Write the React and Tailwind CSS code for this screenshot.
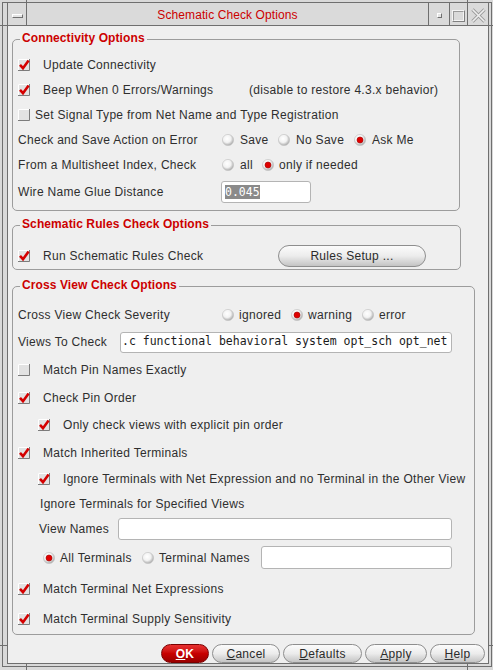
import React from "react";

function Check({ on }) {
  return (
    <svg width="12" height="12" viewBox="0 0 12 12" className="shrink-0 overflow-visible">
      <rect x="0" y="0" width="12" height="12" fill="#e2e2e2" />
      <path d="M0.5 12 V0.5 H12" stroke="#ffffff" fill="none" />
      <path d="M0 11.5 H11.5 V0" stroke="#7c7c7c" fill="none" />
      {on && (
        <path d="M2 5.8 L5 9.2 L10.6 1.6" stroke="#d40000" strokeWidth="2.6" fill="none" strokeLinejoin="miter" />
      )}
    </svg>
  );
}

function Radio({ on }) {
  return (
    <svg width="12" height="12" viewBox="0 0 12 12" className="shrink-0">
      <defs>
        <radialGradient id="rg" cx="42%" cy="38%" r="62%">
          <stop offset="0" stopColor="#ffffff" />
          <stop offset="0.55" stopColor="#f2f2f2" />
          <stop offset="1" stopColor="#a9a9a9" />
        </radialGradient>
      </defs>
      <circle cx="6" cy="6" r="5.6" fill="url(#rg)" stroke="#c2c2c2" strokeWidth="0.6" />
      {on && <circle cx="6" cy="6" r="3" fill="#e00000" stroke="#a00000" strokeWidth="0.6" />}
    </svg>
  );
}

function Title({ children }) {
  return (
    <div className="-mt-[9px] ml-[7px] px-[2px] w-fit bg-[#efefef] leading-[14px] font-bold text-[#cc0000] tracking-[0.1px]">
      {children}
    </div>
  );
}

function Pill({ children, className }) {
  return (
    <div
      className={
        "flex items-center justify-center rounded-full border border-[#8e8e8e] bg-linear-to-b from-[#fbfbfb] via-[#ececec] to-[#c4c4c4] text-[#2b2b2b] " +
        className
      }
    >
      {children}
    </div>
  );
}

const mono = "font-['DejaVu_Sans_Mono',monospace] text-[11.5px] tracking-[0px]";

export default function App() {
  return (
    <div className="relative w-[493px] h-[670px] bg-[#d9d9d9] pt-[2px] pl-[2px] pr-[1px] pb-[3px] font-['Liberation_Sans',Arial,sans-serif] text-[12px] text-[#2e2e2e] tracking-[0.3px]">
      {/* frame corner ticks */}
      <div className="absolute left-[26px] top-0 w-px h-[3px] bg-[#6f6f6f]" />
      <div className="absolute left-[467px] top-0 w-px h-[3px] bg-[#6f6f6f]" />
      <div className="absolute left-[26px] bottom-0 w-px h-[7px] bg-[#6f6f6f]" />
      <div className="absolute left-[467px] bottom-0 w-px h-[7px] bg-[#6f6f6f]" />
      <div className="absolute left-0 top-[25px] w-[8px] h-px bg-[#6f6f6f]" />
      <div className="absolute right-0 top-[25px] w-[5px] h-px bg-[#6f6f6f]" />
      <div className="absolute left-0 top-[645px] w-[8px] h-px bg-[#6f6f6f]" />
      <div className="absolute right-0 top-[645px] w-[5px] h-px bg-[#6f6f6f]" />

      <div className="h-full border border-[#6f6f6f] pl-[4px] pr-[2px] pb-[2px]">
        <div className="h-full flex flex-col border-l border-r border-b border-[#6f6f6f]">
          {/* title bar */}
          <div className="h-[23px] shrink-0 flex border-b border-[#6f6f6f] bg-[#dadada]">
            <div className="w-[19px] border-r border-[#6f6f6f] flex items-center justify-center pt-[3px]">
              <div className="w-[11px] h-[4px] bg-[#e4e4e4] border border-t-white border-l-white border-b-[#707070] border-r-[#707070]" />
            </div>
            <div className="flex-1 flex items-center justify-center text-[#cc0000] pt-[2px] tracking-[0.1px]">
              Schematic Check Options
            </div>
            <div className="w-[21px] border-l border-[#6f6f6f] flex items-center justify-center pt-[2px]">
              <div className="w-[5px] h-[5px] bg-[#e4e4e4] border border-t-white border-l-white border-b-[#707070] border-r-[#707070]" />
            </div>
            <div className="w-[18px] border-l border-[#6f6f6f] flex items-center justify-center pt-[3px]">
              <div className="w-[13px] h-[12px] border border-t-[#f4f4f4] border-l-[#f4f4f4] border-b-[#808080] border-r-[#808080]">
                <div className="w-full h-full border border-t-[#9a9a9a] border-l-[#9a9a9a] border-b-[#f4f4f4] border-r-[#f4f4f4]" />
              </div>
            </div>
            <div className="w-[21px] border-l border-[#6f6f6f] flex items-center justify-center pt-[2px]">
              <svg width="15" height="15" viewBox="0 0 15 15">
                <path d="M1.5 1.5 L13.5 13.5 M13.5 1.5 L1.5 13.5" stroke="#9a9a9a" strokeWidth="3.2" />
                <path d="M1.5 1.5 L13.5 13.5 M13.5 1.5 L1.5 13.5" stroke="#eeeeee" strokeWidth="1.6" />
              </svg>
            </div>
          </div>

          {/* content */}
          <div className="flex-1 bg-[#efefef] pl-[4px] pt-[13px] flex flex-col">
            {/* Connectivity */}
            <div className="w-[448px] h-[172px] shrink-0 border border-[#9c9c9c] rounded-[5px]">
              <Title>Connectivity Options</Title>
              <div className="pt-[7px] pl-[5px]">
                <div className="h-[25px] flex items-center">
                  <Check on />
                  <span className="ml-[13px]">Update Connectivity</span>
                </div>
                <div className="h-[25px] flex items-center">
                  <Check on />
                  <span className="ml-[13px] w-[206px]">Beep When 0 Errors/Warnings</span>
                  <span>(disable to restore 4.3.x behavior)</span>
                </div>
                <div className="h-[25px] flex items-center">
                  <Check />
                  <span className="ml-[5px]">Set Signal Type from Net Name and Type Registration</span>
                </div>
                <div className="h-[25px] flex items-center">
                  <span className="w-[204px]">Check and Save Action on Error</span>
                  <div className="w-[56px] flex items-center gap-[6px]">
                    <Radio />
                    <span>Save</span>
                  </div>
                  <div className="w-[76px] flex items-center gap-[6px]">
                    <Radio />
                    <span>No Save</span>
                  </div>
                  <div className="flex items-center gap-[6px]">
                    <Radio on />
                    <span>Ask Me</span>
                  </div>
                </div>
                <div className="h-[25px] flex items-center">
                  <span className="w-[204px]">From a Multisheet Index, Check</span>
                  <div className="w-[40px] flex items-center gap-[6px]">
                    <Radio />
                    <span>all</span>
                  </div>
                  <div className="flex items-center gap-[5px]">
                    <Radio on />
                    <span>only if needed</span>
                  </div>
                </div>
                <div className="h-[29px] flex items-center">
                  <span className="w-[203px]">Wire Name Glue Distance</span>
                  <div className="w-[90px] h-[22px] bg-white border border-[#b4b4b4] rounded-[3px] flex items-center pl-[3px]">
                    <span className={mono + " bg-[#8a8a8a] text-white leading-[14px]"}>0.045</span>
                  </div>
                </div>
              </div>
            </div>

            {/* Schematic rules */}
            <div className="mt-[14px] w-[449px] h-[45px] shrink-0 border border-[#9c9c9c] rounded-[5px]">
              <Title>Schematic Rules Check Options</Title>
              <div className="pt-[11px] pl-[5px]">
                <div className="h-[27px] flex items-center">
                  <Check on />
                  <span className="ml-[13px] w-[235px]">Run Schematic Rules Check</span>
                  <Pill className="w-[148px] h-[22px]">Rules Setup ...</Pill>
                </div>
              </div>
            </div>

            {/* Cross view */}
            <div className="mt-[16px] w-[463px] h-[349px] shrink-0 border border-[#9c9c9c] rounded-[5px]">
              <Title>Cross View Check Options</Title>
              <div className="pt-[10px] pl-[5px]">
                <div className="h-[26px] flex items-center">
                  <span className="w-[204px]">Cross View Check Severity</span>
                  <div className="w-[69px] flex items-center gap-[5px]">
                    <Radio />
                    <span>ignored</span>
                  </div>
                  <div className="w-[71px] flex items-center gap-[5px]">
                    <Radio on />
                    <span>warning</span>
                  </div>
                  <div className="flex items-center gap-[5px]">
                    <Radio />
                    <span>error</span>
                  </div>
                </div>
                <div className="h-[28px] flex items-center">
                  <span className="w-[102px]">Views To Check</span>
                  <div className="w-[332px] h-[21px] bg-white border border-[#b4b4b4] rounded-[3px] flex items-center pl-[1px] overflow-hidden whitespace-nowrap">
                    <span className={mono + " text-[#1a1a1a]"}>.c functional behavioral system opt_sch opt_net</span>
                  </div>
                </div>
                <div className="h-[28px] flex items-center">
                  <Check />
                  <span className="ml-[13px]">Match Pin Names Exactly</span>
                </div>
                <div className="h-[27px] flex items-center">
                  <Check on />
                  <span className="ml-[13px]">Check Pin Order</span>
                </div>
                <div className="h-[28px] flex items-center pl-[20px]">
                  <Check on />
                  <span className="ml-[13px]">Only check views with explicit pin order</span>
                </div>
                <div className="h-[27px] flex items-center">
                  <Check on />
                  <span className="ml-[13px]">Match Inherited Terminals</span>
                </div>
                <div className="h-[25px] flex items-center pl-[20px]">
                  <Check on />
                  <span className="ml-[13px] whitespace-nowrap">Ignore Terminals with Net Expression and no Terminal in the Other View</span>
                </div>
                <div className="h-[25px] flex items-center pl-[22px]">
                  <span>Ignore Terminals for Specified Views</span>
                </div>
                <div className="h-[26px] flex items-center pl-[21px]">
                  <span className="w-[79px]">View Names</span>
                  <div className="w-[334px] h-[22px] bg-white border border-[#b4b4b4] rounded-[3px]" />
                </div>
                <div className="h-[31px] flex items-center pl-[25px]">
                  <div className="w-[99px] flex items-center gap-[5px]">
                    <Radio on />
                    <span>All Terminals</span>
                  </div>
                  <div className="w-[119px] flex items-center gap-[5px]">
                    <Radio />
                    <span>Terminal Names</span>
                  </div>
                  <div className="w-[191px] h-[23px] bg-white border border-[#b4b4b4] rounded-[3px]" />
                </div>
                <div className="h-[31px] flex items-center">
                  <Check on />
                  <span className="ml-[13px]">Match Terminal Net Expressions</span>
                </div>
                <div className="h-[29px] flex items-center">
                  <Check on />
                  <span className="ml-[13px]">Match Terminal Supply Sensitivity</span>
                </div>
              </div>
            </div>

            {/* buttons */}
            <div className="mt-[9px] h-[19px] shrink-0 flex justify-end gap-[3px] pr-[3px]">
              <div className="w-[48px] h-[19px] flex items-center justify-center rounded-full border border-[#7a0000] bg-linear-to-b from-[#e83030] via-[#c80000] to-[#9a0000] text-white font-bold">
                <span><span className="underline">O</span>K</span>
              </div>
              <Pill className="w-[68px] h-[19px]">
                <span><span className="underline">C</span>ancel</span>
              </Pill>
              <Pill className="w-[79px] h-[19px]">
                <span><span className="underline">D</span>efaults</span>
              </Pill>
              <Pill className="w-[62px] h-[19px]">
                <span><span className="underline">A</span>pply</span>
              </Pill>
              <Pill className="w-[55px] h-[19px]">
                <span><span className="underline">H</span>elp</span>
              </Pill>
            </div>
          </div>
        </div>
      </div>
    </div>
  );
}
